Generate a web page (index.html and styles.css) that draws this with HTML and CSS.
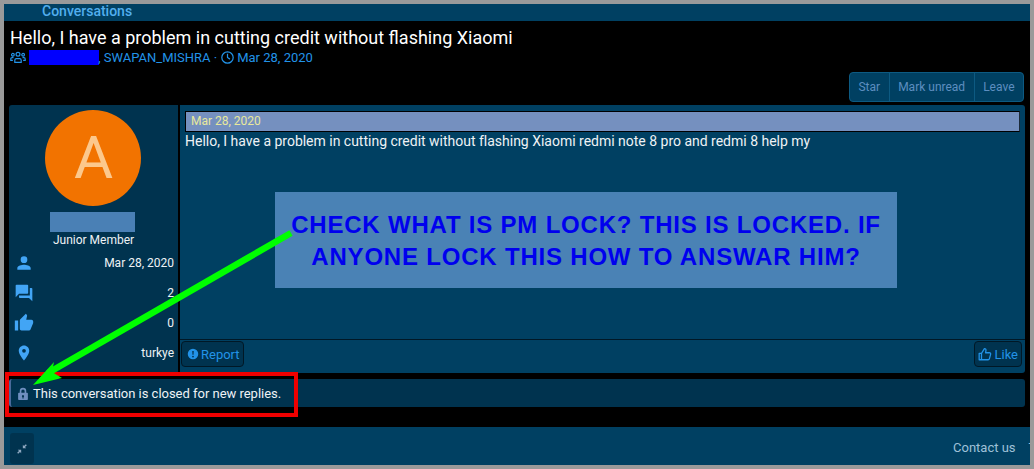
FILE: index.html
```html
<!DOCTYPE html>
<html lang="en">
<head>
  <meta charset="UTF-8">
  <title>Conversation</title>
  <link rel="stylesheet" href="styles.css">
</head>
<body>
  <div class="page">
    <nav class="nav-bar"><a class="nav-link">Conversations</a></nav>

    <header class="convo-head">
      <h1 class="convo-title">Hello, I have a problem in cutting credit without flashing Xiaomi</h1>
      <div class="convo-meta">
        <svg class="meta-icon" viewBox="0 0 20 16" width="16" height="13" fill="none" stroke="currentColor" stroke-width="1.5"><circle cx="10" cy="4" r="2.4"/><path d="M6 14v-2.5a2 2 0 0 1 2-2h4a2 2 0 0 1 2 2V14z"/><circle cx="3.6" cy="4.6" r="1.7"/><circle cx="16.4" cy="4.6" r="1.7"/><path d="M3.6 11.5H1V9.8a1.6 1.6 0 0 1 1.6-1.6h1.8M16.4 11.5H19V9.8a1.6 1.6 0 0 0-1.6-1.6h-1.8"/></svg>
        <span class="redact"></span><span>, SWAPAN_MISHRA · </span>
        <svg class="meta-icon clock" viewBox="0 0 16 16" width="13" height="13" fill="none" stroke="currentColor" stroke-width="1.5"><circle cx="8" cy="8" r="7"/><path d="M8 3.5V8l3 2"/></svg>
        <span>Mar 28, 2020</span>
      </div>
      <div class="convo-actions">
        <div class="btn-group">
          <a class="btn">Star</a>
          <a class="btn">Mark unread</a>
          <a class="btn">Leave</a>
        </div>
      </div>
    </header>

    <article class="message">
      <aside class="user-cell">
        <div class="avatar">A</div>
        <div class="user-name"></div>
        <div class="user-title">Junior Member</div>
        <dl class="user-stats">
          <div class="stat">
            <dt><svg viewBox="0 0 24 24" width="20" height="20" fill="currentColor"><path d="M12 12a4 4 0 1 0 0-8 4 4 0 0 0 0 8zm0 2c-2.700 0-8 1.300-8 4v2h16v-2c0-2.700-5.300-4-8-4z"/></svg></dt>
            <dd>Mar 28, 2020</dd>
          </div>
          <div class="stat">
            <dt><svg viewBox="0 0 24 24" width="20" height="20" fill="currentColor"><path d="M21 6h-2v9H6v2c0 .6.400 1 1 1h11l4 4V7c0-.6-.400-1-1-1zm-4 6V3c0-.6-.400-1-1-1H3c-.6 0-1 .400-1 1v14l4-4h10c.6 0 1-.400 1-1z"/></svg></dt>
            <dd>2</dd>
          </div>
          <div class="stat">
            <dt><svg viewBox="0 0 24 24" width="20" height="20" fill="currentColor"><path d="M1 21h4V9H1v12zm22-11c0-1.100-.9-2-2-2h-6.300l1-4.600v-.3c0-.4-.2-.8-.4-1.100L14.200 1 7.600 7.600C7.200 8 7 8.500 7 9v10c0 1.100.9 2 2 2h9c.8 0 1.500-.5 1.800-1.200l3-7.100c.1-.2.200-.5.200-.7v-2z"/></svg></dt>
            <dd>0</dd>
          </div>
          <div class="stat">
            <dt><svg viewBox="0 0 24 24" width="18" height="18" fill="currentColor"><path d="M12 2C8.100 2 5 5.100 5 9c0 5.200 7 13 7 13s7-7.800 7-13c0-3.900-3.100-7-7-7zm0 9.500a2.500 2.500 0 1 1 0-5 2.500 2.500 0 0 1 0 5z"/></svg></dt>
            <dd>turkye</dd>
          </div>
        </dl>
      </aside>
      <div class="message-main">
        <div class="message-body">
          <div class="date-bar">Mar 28, 2020</div>
          <p class="message-text">Hello, I have a problem in cutting credit without flashing Xiaomi redmi note 8 pro and redmi 8 help my</p>
        </div>
        <footer class="message-foot">
          <a class="action action-report">
            <svg viewBox="0 0 16 16" width="12" height="12" fill="currentColor"><path fill-rule="evenodd" d="M8 1a7 7 0 1 0 0 14A7 7 0 0 0 8 1zM7 4h2l-.3 5H7.300zm1 6.200a1.200 1.200 0 1 1 0 2.400 1.200 1.200 0 0 1 0-2.400z"/></svg>
            Report
          </a>
          <a class="action">
            <svg viewBox="0 0 24 24" width="14" height="15" fill="none" stroke="currentColor" stroke-width="2.200" stroke-linejoin="round"><path d="M2 10h4v11H2zM6 10l5-8c2 0 3 1.500 2.600 3.300L13 9h6.500c1.500 0 2.500 1.300 2.100 2.700l-2 7.500c-.3 1.100-1.200 1.800-2.300 1.800H6z"/></svg>
            Like
          </a>
        </footer>
      </div>
    </article>

    <div class="closed-notice">
      <svg viewBox="2 0 12 16" width="10" height="13" fill="currentColor"><path fill-rule="evenodd" d="M4 7V5a4 4 0 0 1 8 0v2h1a1 1 0 0 1 1 1v7a1 1 0 0 1-1 1H3a1 1 0 0 1-1-1V8a1 1 0 0 1 1-1zm2 0h4V5a2 2 0 0 0-4 0zm2 3a1.300 1.300 0 0 0-.7 2.400V14h1.400v-1.600A1.300 1.300 0 0 0 8 10z"/></svg>
      <span>This conversation is closed for new replies.</span>
    </div>

    <footer class="page-foot">
      <a class="collapse">
        <svg viewBox="0 0 12 12" width="10" height="10" fill="currentColor"><path d="M1 7h4v4L3.600 9.600 1.400 11.800.2 10.600l2.200-2.200zM11 5H7V1l1.400 1.400L10.600.2l1.200 1.200-2.200 2.200z"/></svg>
      </a>
      <div class="foot-links"><a>Contact us</a><a>Terms</a></div>
    </footer>

    <div class="note-box">Check what is PM lock? this is locked. if anyone lock this how to answar him?</div>
    <div class="red-box"></div>
    <svg class="arrow" viewBox="0 0 1034 469" width="1034" height="469"><path d="M291 233L48 373" stroke="#00ff00" stroke-width="6.500" fill="none"/><path d="M33 385L54 362L52 372L62 378z" fill="#00ff00"/></svg>
  </div>
</body>
</html>
```

FILE: styles.css
```css
* {
  margin: 0;
  padding: 0;
  box-sizing: border-box;
}
html, body {
  height: 100%;
  overflow: hidden;
}
body {
  background-color: #9a9a9a;
  padding: 4px;
  font-family: Roboto, "Liberation Sans", sans-serif;
  color: #eef2f5;
}
.page {
  height: 461px;
  background-color: #000000;
  overflow: hidden;
  display: flex;
  flex-direction: column;
}
.nav-bar {
  height: 17px;
  background-color: #004062;
  padding-left: 38px;
  font-size: 14px;
  font-weight: 500;
  line-height: 15px;
  color: #52aeee;
  flex-shrink: 0;
}
.convo-head {
  padding: 5px 6px 0 6px;
  height: 84px;
  flex-shrink: 0;
}
.convo-title {
  font-size: 18px;
  font-weight: 400;
  line-height: 23px;
  color: #ffffff;
}
.convo-meta {
  display: flex;
  align-items: center;
  font-size: 13px;
  line-height: 17px;
  color: #2293e8;
}
.meta-icon {
  flex-shrink: 0;
}
.clock {
  margin-right: 3px;
  margin-left: 4px;
}
.redact {
  width: 70px;
  height: 15px;
  margin: 0 -1px 0 3px;
  background-color: #0000ff;
}
.convo-actions {
  display: flex;
  justify-content: flex-end;
  margin-top: 6px;
}
.btn-group {
  display: flex;
  height: 30px;
  background-color: #004062;
  border: 1px solid #0d5a82;
  border-radius: 4px;
}
.btn {
  font-size: 12px;
  line-height: 28px;
  color: #5d8ec0;
  padding: 0 8.5px;
  border-left: 1px solid #0d5a82;
}
.btn:first-child {
  border-left: none;
}
.message {
  display: flex;
  height: 268px;
  margin: 0 5px;
  flex-shrink: 0;
  gap: 2px;
  background-color: #000000;
}
.user-cell {
  width: 169px;
  background-color: #00334f;
  display: flex;
  flex-direction: column;
  align-items: center;
  padding: 5px 4px 0 4px;
  border-radius: 3px 0 0 3px;
  flex-shrink: 0;
}
.avatar {
  width: 96px;
  height: 96px;
  margin-right: 2px;
  padding-left: 2px;
  border-radius: 50%;
  background-color: #f27300;
  color: #fcc88c;
  font-size: 60px;
  line-height: 96px;
  text-align: center;
  flex-shrink: 0;
}
.user-name {
  width: 85px;
  height: 20px;
  margin-right: 2px;
  background-color: #4a80b5;
  margin-top: 6px;
}
.user-title {
  font-size: 12px;
  line-height: 16px;
}
.user-stats {
  width: 100%;
}
.stat {
  display: flex;
  justify-content: space-between;
  align-items: center;
  height: 30px;
  font-size: 12px;
}
.stat dt {
  width: 20px;
  margin-left: 1px;
  display: flex;
  justify-content: center;
  color: #42a5f5;
}
.message-main {
  flex: 1;
  background-color: #004062;
  display: flex;
  flex-direction: column;
  border-radius: 0 3px 3px 0;
}
.message-body {
  flex: 1;
  padding: 6px 5px 0 5px;
}
.date-bar {
  height: 21px;
  background-color: #7590bf;
  border: 1px solid #000000;
  border-right-color: #1a2a3a;
  color: #e8e89c;
  font-size: 12px;
  line-height: 19px;
  padding-left: 5px;
}
.message-text {
  font-size: 14px;
  line-height: 19px;
  letter-spacing: -0.01px;
}
.message-foot {
  height: 34px;
  border-top: 1px solid #001826;
  display: flex;
  justify-content: space-between;
  align-items: flex-start;
  padding: 1px 3px 0 1px;
}
.action {
  display: flex;
  align-items: center;
  gap: 2px;
  height: 26px;
  padding: 0 3px;
  background-color: #00334f;
  border: 1px solid #001826;
  border-radius: 4px;
  font-size: 13px;
  color: #2293e8;
}
.action-report svg {
  margin-left: 2px;
}
.closed-notice {
  display: flex;
  align-items: center;
  gap: 5px;
  height: 28px;
  margin: 6px 5px 0;
  padding-left: 7px;
  background-color: #00334f;
  border-left: 2px solid #4a6a9a;
  border-radius: 3px;
  font-size: 13px;
  letter-spacing: -0.02px;
  flex-shrink: 0;
}
.closed-notice svg {
  color: #6f8fc0;
}
.page-foot {
  margin-top: 20px;
  flex: 1;
  background-color: #004062;
  display: flex;
  justify-content: space-between;
  align-items: center;
  padding: 0 0 0 6px;
}
.collapse {
  width: 24px;
  height: 31px;
  margin-top: 5px;
  background-color: #00334f;
  border-radius: 3px;
  display: flex;
  align-items: center;
  justify-content: center;
  color: #8fa8c0;
}
.foot-links {
  display: flex;
  gap: 13px;
  width: 77px;
  overflow: hidden;
  font-size: 13px;
  color: #9fc0d8;
  white-space: nowrap;
  flex-shrink: 0;
  margin-top: 2px;
}
.note-box {
  position: absolute;
  left: 275px;
  top: 192px;
  width: 622px;
  height: 96px;
  background-color: #4a82b5;
  color: #0000ee;
  font-family: "Liberation Sans", Arial, sans-serif;
  font-weight: 700;
  font-size: 24px;
  line-height: 32px;
  letter-spacing: 0.8px;
  text-align: center;
  text-transform: uppercase;
  padding: 17px 10px 0;
}
.red-box {
  position: absolute;
  left: 5px;
  top: 372px;
  width: 293px;
  height: 45px;
  border: 4px solid #f00000;
}
.arrow {
  position: absolute;
  left: 0;
  top: 0;
}
```
